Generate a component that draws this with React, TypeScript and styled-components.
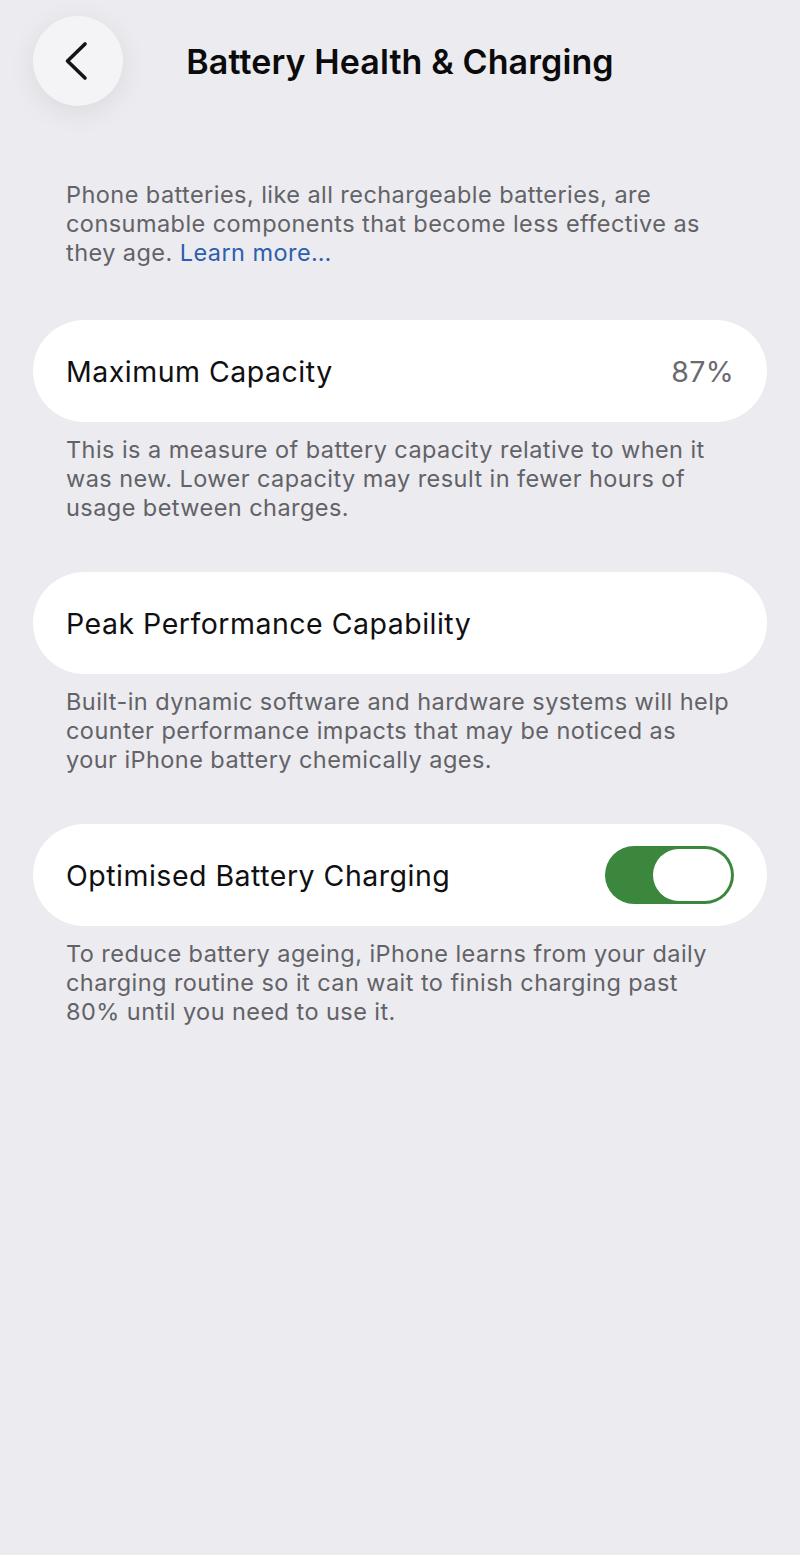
import styled, { createGlobalStyle } from 'styled-components';

const GlobalStyle = createGlobalStyle`
  html, body {
    margin: 0;
    padding: 0;
    background: #ebebf0;
  }
  body {
    font-family: Inter, "Noto Sans", sans-serif;
    -webkit-font-smoothing: antialiased;
  }
`;

const Page = styled.div`
  min-height: 1555px;
  background: #ebebf0;
  padding-bottom: 40px;
`;

const Header = styled.header`
  display: grid;
  grid-template-columns: 90px 1fr 90px;
  align-items: center;
  padding: 16px 33px 0;
  height: 90px;
`;

const BackButton = styled.button`
  width: 90px;
  height: 90px;
  border: none;
  border-radius: 50%;
  background: #f4f4f6;
  box-shadow: 0 6px 28px rgba(0, 0, 0, 0.08);
  display: flex;
  align-items: center;
  justify-content: center;
  padding: 0;
  cursor: pointer;
`;

const Title = styled.h1`
  margin: 0;
  text-align: center;
  font-size: 34px;
  font-weight: 600;
  letter-spacing: 0.1px;
  color: #0b0b0c;
`;

const Content = styled.main`
  display: flex;
  flex-direction: column;
  padding: 74px 33px 0;
`;

// footnote under each group
const Note = styled.p<{ $gap?: number }>`
  margin: 0 0 ${(p) => p.$gap ?? 50}px;
  padding: 0 33px;
  font-size: 23.5px;
  line-height: 29px;
  color: #626267;
  letter-spacing: 0.44px;
`;

const Link = styled.a`
  color: #2c5fae;
  text-decoration: none;
`;

const Row = styled.div`
  display: flex;
  align-items: center;
  justify-content: space-between;
  height: 102px;
  padding: 0 33px;
  border-radius: 51px;
  background: #ffffff;
  margin-bottom: 13px;
`;

const Label = styled.span`
  font-size: 28.5px;
  color: #101012;
  letter-spacing: 0.5px;
`;

const Value = styled.span`
  font-size: 28.5px;
  color: #6a6a6f;
  letter-spacing: 0.3px;
`;

const Toggle = styled.div<{ $on: boolean }>`
  width: 129px;
  height: 58px;
  box-sizing: border-box;
  border-radius: 29px;
  padding: 3px;
  background: ${(p) => (p.$on ? '#3a873d' : '#e3e3e8')};
  display: flex;
  justify-content: ${(p) => (p.$on ? 'flex-end' : 'flex-start')};
`;

const Knob = styled.div`
  width: 78px;
  height: 52px;
  border-radius: 26px;
  background: #ffffff;
`;

function Chevron() {
  return (
    <svg width="90" height="90" viewBox="0 0 90 90" fill="none">
      <path
        d="M52 28 L34.5 45 L52 62"
        stroke="#141416"
        strokeWidth="3.6"
        strokeLinecap="round"
        strokeLinejoin="round"
      />
    </svg>
  );
}

export default function App() {
  return (
    <Page>
      <GlobalStyle />
      <Header>
        <BackButton aria-label="Back">
          <Chevron />
        </BackButton>
        <Title>Battery Health &amp; Charging</Title>
        <span />
      </Header>

      <Content>
        <Note $gap={53}>
          Phone batteries, like all rechargeable batteries, are
          <br />
          consumable components that become less effective as
          <br />
          they age. <Link href="#">Learn more…</Link>
        </Note>

        <Row>
          <Label>Maximum Capacity</Label>
          <Value>87%</Value>
        </Row>
        <Note>
          This is a measure of battery capacity relative to when it
          <br />
          was new. Lower capacity may result in fewer hours of
          <br />
          usage between charges.
        </Note>

        <Row>
          <Label>Peak Performance Capability</Label>
        </Row>
        <Note>
          Built-in dynamic software and hardware systems will help
          <br />
          counter performance impacts that may be noticed as
          <br />
          your iPhone battery chemically ages.
        </Note>

        <Row>
          <Label>Optimised Battery Charging</Label>
          <Toggle $on>
            <Knob />
          </Toggle>
        </Row>
        <Note>
          To reduce battery ageing, iPhone learns from your daily
          <br />
          charging routine so it can wait to finish charging past
          <br />
          80% until you need to use it.
        </Note>
      </Content>
    </Page>
  );
}
